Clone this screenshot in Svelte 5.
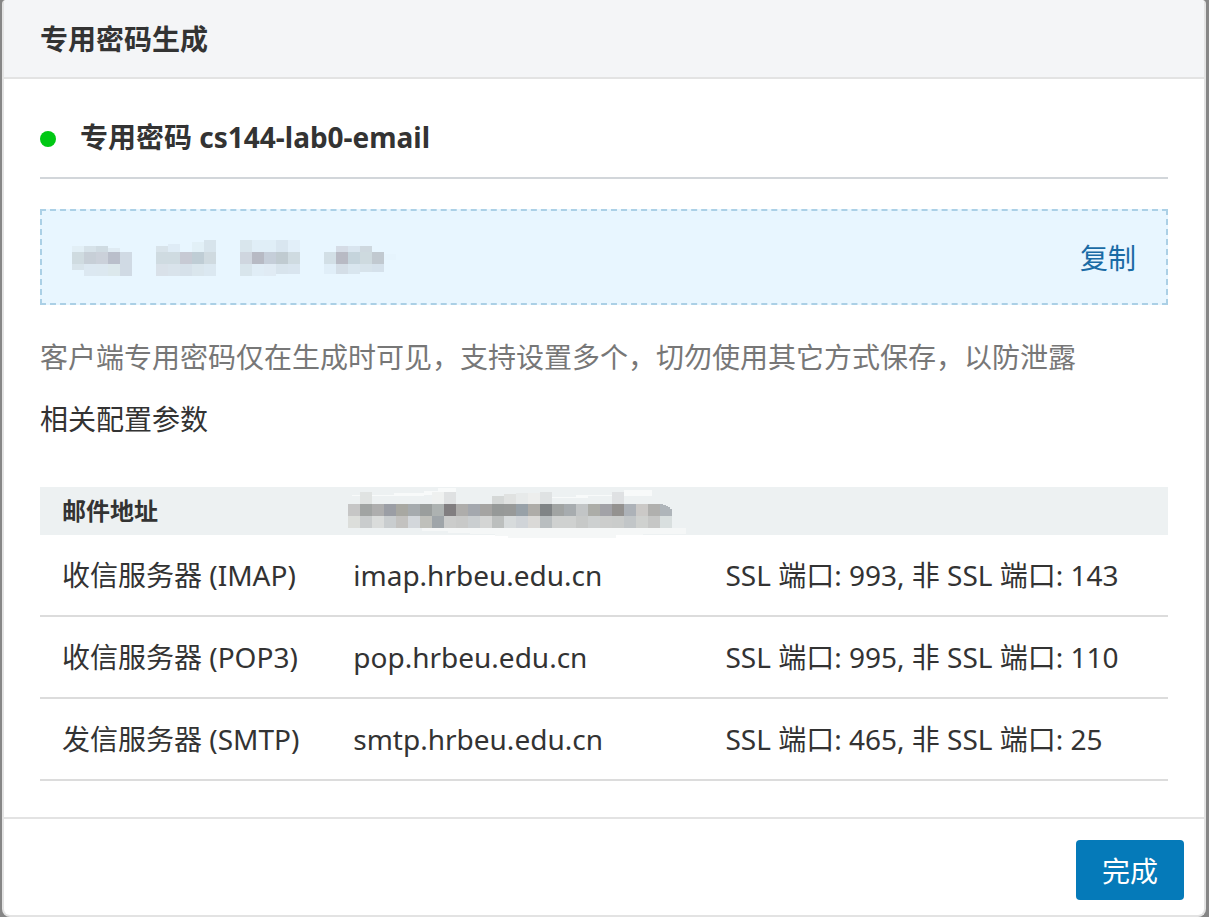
<script>
  const servers = [
    { name: '收信服务器 (IMAP)', host: 'imap.hrbeu.edu.cn', ports: 'SSL 端口: 993, 非 SSL 端口: 143' },
    { name: '收信服务器 (POP3)', host: 'pop.hrbeu.edu.cn', ports: 'SSL 端口: 995, 非 SSL 端口: 110' },
    { name: '发信服务器 (SMTP)', host: 'smtp.hrbeu.edu.cn', ports: 'SSL 端口: 465, 非 SSL 端口: 25' }
  ];

  // Masked password: four groups of blocks, each block is [x, y, height, colour]
  const secret = [
    [0, 6, 6, '#e2eff6'], [12, 6, 6, '#d6e2e9'], [24, 6, 6, '#cfdbe2'], [36, 8, 4, '#dfebf3'],
    [0, 12, 12, '#cfdbe0'], [12, 12, 12, '#c7cfd7'], [24, 12, 12, '#cbd1da'], [36, 12, 12, '#babfcb'], [48, 12, 12, '#d0dae4'],
    [0, 24, 6, '#d8e4eb'], [12, 24, 12, '#dce8f1'], [24, 24, 12, '#dce8f0'], [36, 24, 12, '#dce8ec'], [48, 24, 12, '#d0dae4'],
    [84, 6, 6, '#d8e3ea'], [96, 4, 8, '#dfecf6'], [120, 2, 10, '#e2f0f7'], [132, 0, 12, '#d7e4ec'],
    [84, 12, 12, '#cfdbe1'], [96, 12, 12, '#cfdbe1'], [108, 12, 12, '#c7cad4'], [120, 12, 12, '#bfcdd5'], [132, 12, 12, '#cfdae0'],
    [84, 24, 12, '#d9e1e9'], [96, 24, 12, '#d9e3eb'], [108, 24, 12, '#d6e1ea'], [120, 24, 12, '#dae6ed'], [132, 24, 12, '#dbe8f1'],
    [168, 0, 12, '#d9e6ed'], [180, 0, 12, '#e0eef7'], [192, 0, 12, '#e0eef7'], [204, 0, 12, '#d9e6f0'], [216, 0, 12, '#e2eff9'],
    [168, 12, 12, '#cfd6df'], [180, 12, 12, '#b7bac4'], [192, 12, 12, '#c5ced9'], [204, 12, 12, '#c0cbd1'], [216, 12, 12, '#cfdbe1'],
    [168, 24, 12, '#d8e5ec'], [180, 24, 12, '#e0edf6'], [192, 24, 12, '#e0ebf4'], [204, 24, 10, '#d8e4ed'], [216, 24, 10, '#d9e5ef'],
    [264, 6, 6, '#d5dce6'], [276, 6, 6, '#d9e5ef'], [288, 6, 6, '#ced8df'],
    [252, 12, 12, '#d2dfe6'], [264, 12, 12, '#b8bac4'], [276, 12, 12, '#c5d4dc'], [288, 12, 12, '#cedadf'], [300, 12, 12, '#c1c9d0'], [312, 14, 6, '#e6f4fd'],
    [252, 24, 10, '#e0eef8'], [264, 24, 10, '#d4dee7'], [276, 24, 10, '#d9e6ef'], [288, 24, 8, '#d7e3eb'], [300, 24, 8, '#d5e1eb']
  ];

  // Masked mail address, 12px blocks left to right
  const mainRow = ['#c6c6c6', '#a1a4a3', '#aeaeae', '#9b9ea5', '#a8a8a2', '#a6abae', '#9a9e9d', '#adb2b1', '#817e80', '#aeadab', '#a4a8ae', '#a5a4a2', '#969998', '#989a99', '#98a1a8', '#aeaca8', '#808486', '#a1a4a3', '#a7acaf', '#c2c5c6', '#acada8', '#a2a2a7', '#949290', '#adb2b8', '#cbc9c7', '#b0b0ae'];
  const lowRow = ['#dcdedb', '#c9cccd', '#dadcdb', '#c9cdcf', '#c3c2c0', '#d3d7db', '#bfc0bb', '#9fa5a9', '#cbcccb', '#c8c9c8', '#caced0', '#d4d5d4', '#bcbfbe', '#d7dbdc', '#d0d4d8', '#dad9d7', '#b9bec0', '#cfd1d0', '#cfd1d0', '#c7c9c8', '#cdd0d0', '#cccdcc', '#cacccb', '#c2c6c8', '#cfd1cf', '#c6c7c6', '#d9dfdf'];
  const peaks = [[1, 12, '#e0e3e2'], [7, 12, '#eff1f0'], [8, 12, '#dfe1e2'], [12, 8, '#d5d8d7'], [13, 10, '#e0e2e1'], [14, 11, '#e7eaea'], [15, 11, '#edeeed'], [16, 12, '#dfe2e3'], [22, 12, '#dfe1e3']];
</script>

<div class="dialog" role="dialog" aria-labelledby="dialog-title">
  <header>
    <h1 id="dialog-title">专用密码生成</h1>
  </header>

  <main>
    <h2><span class="dot"></span>专用密码 cs144-lab0-email</h2>

    <div class="secret">
      <svg width="324" height="36" viewBox="0 0 324 36" shape-rendering="crispEdges" aria-hidden="true">
        {#each secret as [x, y, h, fill]}
          <rect {x} {y} width="12" height={h} {fill} />
        {/each}
      </svg>
      <button class="copy" type="button">复制</button>
    </div>

    <p class="hint">客户端专用密码仅在生成时可见，支持设置多个，切勿使用其它方式保存，以防泄露</p>
    <p class="caption">相关配置参数</p>

    <table>
      <colgroup>
        <col class="col-name" />
        <col class="col-host" />
        <col />
      </colgroup>
      <thead>
        <tr>
          <th scope="col">邮件地址</th>
          <th class="address" colspan="2">
            <svg width="341" height="48" viewBox="-3 -5 341 48" shape-rendering="crispEdges" aria-hidden="true">
              <path d="M4 3H46V1H76V-1H90V-4H108V3H76V4H4Z" fill="#f8fafa" />
              <path d="M192 5H228V3H268V1H276V-2H304V4H240V6H192Z" fill="#f8fafa" />
              <path d="M74 36H338V42H295V43H268V46H160V44H147V42H122V41H100V39H74Z" fill="#f5f7f7" />
              {#each peaks as [col, h, fill]}
                <rect x={col * 12} y={12 - h} width="12" height={h} {fill} />
              {/each}
              {#each mainRow as fill, i}
                <rect x={i * 12} y="12" width="12" height="12" {fill} />
              {/each}
              <path d="M312 12H315V13H318V14H320V15H322V17H324V24H312Z" fill="#afb5ba" />
              {#each lowRow as fill, i}
                <rect x={i * 12} y="24" width="12" height="12" {fill} />
              {/each}
            </svg>
          </th>
        </tr>
      </thead>
      <tbody>
        {#each servers as server}
          <tr>
            <td>{server.name}</td>
            <td>{server.host}</td>
            <td>{server.ports}</td>
          </tr>
        {/each}
      </tbody>
    </table>
  </main>

  <footer>
    <button class="done" type="button">完成</button>
  </footer>
</div>

<style>
  :global(body) {
    background: #868686;
  }

  .dialog {
    box-sizing: border-box;
    margin: 0 3px 0 2px;
    border: 2px solid #e3e3e3;
    border-top: 0;
    border-radius: 4px 4px 8px 8px;
    background: #fff;
    color: #333;
    font-family: 'Noto Sans', 'Noto Sans CJK SC', sans-serif;
    font-size: 28px;
    line-height: 40px;
    overflow: hidden;
  }

  header {
    padding: 19px 36px 18px;
    border-bottom: 2px solid #e3e3e3;
    background: #f4f5f7;
  }

  h1,
  h2 {
    margin: 0;
    font-size: 28px;
    font-weight: 700;
  }

  main {
    padding: 38px 36px 36px;
  }

  h2 {
    display: flex;
    align-items: center;
    gap: 24px;
    padding-bottom: 20px;
    border-bottom: 2px solid #d2d6da;
  }

  .dot {
    width: 16px;
    height: 16px;
    margin-top: 4px;
    border-radius: 50%;
    background: #00c814;
  }

  .secret {
    display: flex;
    align-items: center;
    justify-content: space-between;
    box-sizing: border-box;
    min-height: 96px;
    margin-top: 30px;
    padding: 2px 30px 0;
    border: 2px dashed #abd0e6;
    background: #e8f6ff;
  }

  button {
    border: 0;
    font: inherit;
    cursor: pointer;
  }

  .copy {
    padding: 0;
    background: none;
    color: #1a6ba5;
  }

  .hint,
  .caption {
    margin: 32px 0 0;
  }

  .hint {
    color: #777;
  }

  .caption {
    margin-top: 22px;
  }

  table {
    width: 100%;
    margin-top: 48px;
    border-collapse: separate;
    border-spacing: 0;
    table-layout: fixed;
  }

  .col-name {
    width: 26%;
  }

  .col-host {
    width: 33%;
  }

  th,
  td {
    padding: 0 0 0 20px;
    text-align: left;
    white-space: nowrap;
  }

  th:first-child,
  td:first-child {
    padding-left: 22px;
  }

  th {
    height: 48px;
    background: #edf1f2;
    font-size: 24px;
    line-height: 48px;
  }

  th.address {
    padding-left: 12px;
  }

  .address svg {
    display: block;
    overflow: visible;
  }

  td {
    height: 80px;
    border-bottom: 2px solid #dcdcdc;
  }

  footer {
    display: flex;
    justify-content: flex-end;
    padding: 21px 20px 15px;
    border-top: 2px solid #e3e3e3;
  }

  .done {
    padding: 11px 26px 9px;
    border-radius: 4px;
    background: #057ab9;
    color: #fff;
  }
</style>
